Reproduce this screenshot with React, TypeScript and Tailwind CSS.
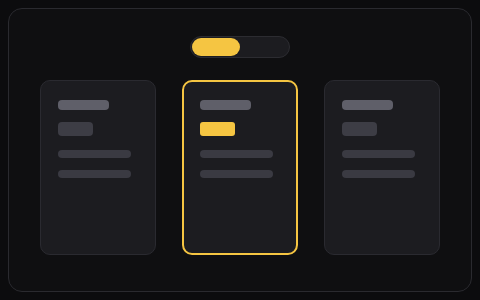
export default function App() {
  const cards = [0, 1, 2];
  return (
    <div className="w-[480px] h-[300px] bg-[#0c0c0e] p-2">
      <div className="h-full rounded-[14px] border border-[#2a2a2f] bg-[#0f0f11] flex flex-col items-center pt-[27px]">
        <div className="w-[100px] h-[22px] rounded-full border border-[#2c2c31] bg-[#1c1c20] p-px">
          <div className="w-[48px] h-[18px] rounded-full bg-[#f5c542]" />
        </div>
        <div className="mt-[22px] flex gap-[26px]">
          {cards.map((i) => {
            const active = i === 1;
            return (
              <div
                key={i}
                className={
                  active
                    ? "w-[116px] h-[175px] rounded-[10px] border-2 border-[#f5c542] bg-[#1c1c20] pt-[18px] pl-[16px]"
                    : "w-[116px] h-[175px] rounded-[10px] border border-[#2a2a30] bg-[#1c1c20] pt-[19px] pl-[17px]"
                }
              >
                <div className="w-[51px] h-[10px] rounded-[4px] bg-[#5f5f69]" />
                <div
                  className={
                    active
                      ? "mt-[12px] w-[35px] h-[14px] rounded-[3px] bg-[#f5c542]"
                      : "mt-[12px] w-[35px] h-[14px] rounded-[4px] bg-[#3d3d45]"
                  }
                />
                <div className="mt-[14px] w-[73px] h-[8px] rounded-full bg-[#3a3a42]" />
                <div className="mt-[12px] w-[73px] h-[8px] rounded-full bg-[#3a3a42]" />
              </div>
            );
          })}
        </div>
      </div>
    </div>
  );
}
